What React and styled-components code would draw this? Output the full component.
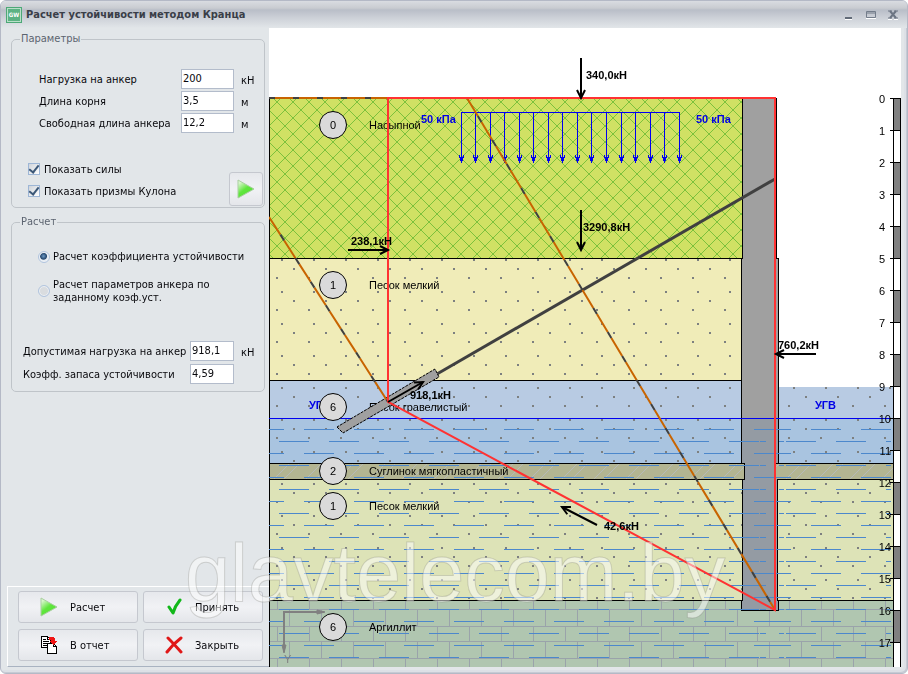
import React, { useState } from "react";
import styled, { createGlobalStyle } from "styled-components";

const GlobalStyle = createGlobalStyle`
  * { box-sizing: border-box; }
  html, body { margin: 0; background: #ffffff; }
  body, button, input {
    font-family: "DejaVu Sans Condensed", "DejaVu Sans", sans-serif;
    font-size: 11px;
    line-height: 13px;
    color: #08080c;
  }
`;

const Window = styled.div`
  position: relative;
  display: flex;
  flex-direction: column;
  min-height: 100vh;
  padding: 0 6px 6px 0;
  overflow: hidden;
  background: #e2e6e9;
  border: 1px solid #b4b9c6;
  border-radius: 6px;
  box-shadow: inset -1px -1px 0 #c6cad4, inset -3px -3px 0 #dde0e6;
`;

const TitleBar = styled.header`
  display: flex;
  align-items: center;
  height: 27px;
  margin-right: -6px;
  padding: 0 7px 0 5px;
  background: linear-gradient(#d9dce1 0, #c9ccd1 7px, #b9bec8 9px, #cdd1d8 17px, #e2e6e9 27px);
`;

const Title = styled.h1`
  flex: 1;
  margin: 0 0 0 4px;
  font-size: 11px;
  line-height: 14px;
  font-weight: bold;
  color: #3a3e48;
`;

const Controls = styled.div`
  display: flex;
  gap: 8px;
`;

const ControlButton = styled.button`
  display: grid;
  place-items: center;
  width: 14px;
  height: 14px;
  padding: 0;
  border: 0;
  background: none;
`;

const Body = styled.div`
  display: flex;
  flex: 1;
`;

const Sidebar = styled.aside`
  display: flex;
  flex-direction: column;
  width: 268px;
  flex: none;
  padding-left: 6px;
`;

const Groups = styled.form`
  display: flex;
  flex-direction: column;
  flex: 1;
  gap: 7px;
  padding: 4px 4px 0;
`;

const Group = styled.fieldset`
  min-width: 0;
  margin: 0;
  padding: ${(p) => p.$padding};
  border: 1px solid #bfc4c9;
  border-radius: 5px;
`;

const Legend = styled.legend`
  margin-left: 8px;
  padding: 0 1px;
  line-height: 14px;
  color: #5c6470;
`;

const FieldList = styled.div`
  display: flex;
  flex-direction: column;
  gap: ${(p) => p.$gap}px;
  padding-left: ${(p) => p.$indent}px;
`;

const FieldRow = styled.div`
  display: flex;
  align-items: center;
  height: 20px;
`;

const FieldLabel = styled.label`
  flex: 1;
  white-space: nowrap;
`;

const NumberBox = styled.input`
  width: ${(p) => p.$width}px;
  height: 20px;
  padding: 0 1px 2px;
  border: 1px solid #b3bccb;
  border-radius: 0;
  background: #ffffff;
  outline: none;
`;

const Unit = styled.span`
  width: 23px;
  margin-left: 7px;
  padding-top: 3px;
`;

const ToggleArea = styled.div`
  display: flex;
  justify-content: space-between;
  height: 48px;
  margin-top: 25px;
  padding: 0 1px 0 16px;
`;

const CheckLabel = styled.label`
  display: flex;
  align-items: center;
  gap: 4px;
  height: 22px;
`;

const CheckBox = styled.input`
  appearance: none;
  display: grid;
  place-items: center;
  width: 12px;
  height: 12px;
  margin: 0;
  border: 1px solid #9db6d6;
  background: linear-gradient(135deg, #cfd4da, #ffffff);
  &:checked::after {
    content: "";
    width: 4px;
    height: 8px;
    margin-top: -2px;
    border: solid #3c5878;
    border-width: 0 2px 2px 0;
    transform: rotate(38deg);
  }
`;

const RadioList = styled.div`
  display: flex;
  flex-direction: column;
  gap: 15px;
  padding: 0 16px 0 26px;
  margin-bottom: 37px;
`;

const RadioLabel = styled.label`
  display: flex;
  align-items: center;
  gap: 4px;
`;

const Radio = styled.input`
  appearance: none;
  flex: none;
  width: 12px;
  height: 12px;
  margin: 0 -1px 0 0;
  border: 1px solid #b0c4de;
  border-radius: 50%;
  background: #d9dcdf;
  box-shadow: inset 0 0 0 1px #eef1f5;
  &:checked {
    background: radial-gradient(circle at 45% 42%, #6f9cc8 0, #24476f 3px, #e6ecf3 4px);
  }
`;

const Button = styled.button`
  display: flex;
  align-items: center;
  gap: 12px;
  height: 32px;
  padding: 0 0 0 21px;
  border: 1px solid #c5c8cf;
  border-radius: 3px;
  background: linear-gradient(#e6e8ec, #f1f2f5 50%, #e4e6ea);
  text-align: left;
`;

const IconButton = styled(Button)`
  align-self: flex-end;
  justify-content: center;
  width: 34px;
  height: 34px;
  padding: 0;
`;

const Actions = styled.div`
  display: grid;
  grid-template-columns: 1fr 1fr;
  gap: 6px 5px;
  padding: 4px 6px 5px 10px;
  border-top: 1px solid #ffffff;
  border-left: 1px solid #ffffff;
  border-bottom: 1px solid #a9b3c1;
`;

const Canvas = styled.main`
  flex: 1;
  min-width: 0;
  background: #ffffff;
`;

const Drawing = styled.svg`
  display: block;
  width: 100%;
  height: auto;
  font-family: "Liberation Sans", Arial, sans-serif;
  font-size: 11px;
`;

const Watermark = styled.div`
  position: absolute;
  left: 184px;
  bottom: 64px;
  font-family: "Liberation Sans", Arial, sans-serif;
  font-size: 81px;
  line-height: 72px;
  color: rgba(255, 255, 255, 0.5);
  -webkit-text-stroke: 1px rgba(110, 112, 105, 0.25);
  pointer-events: none;
`;

function PlayIcon() {
  return (
    <svg width="18" height="20" viewBox="0 0 18 20" aria-hidden="true">
      <defs>
        <linearGradient id="play" x1="0" y1="0" x2="0.7" y2="1">
          <stop offset="0.15" stopColor="#d8f6cc" />
          <stop offset="0.55" stopColor="#5fe63c" />
          <stop offset="1" stopColor="#57df38" />
        </linearGradient>
      </defs>
      <path d="M1 1 17 10 1 19z" fill="url(#play)" stroke="#a9cfa0" strokeWidth="1" />
    </svg>
  );
}

function AcceptIcon() {
  return (
    <svg width="18" height="18" viewBox="0 0 18 18" aria-hidden="true">
      <path d="M4 9 8 15Q10 8 15 2" fill="none" stroke="#12b81a" strokeWidth="3" strokeLinecap="round" strokeLinejoin="round" />
    </svg>
  );
}

function CloseIcon() {
  return (
    <svg width="18" height="18" viewBox="0 0 18 18" aria-hidden="true">
      <path d="M3 2Q8 7 16 16M16 2Q8 8 2 16" fill="none" stroke="#e01818" strokeWidth="3" strokeLinecap="round" />
    </svg>
  );
}

function ReportIcon() {
  return (
    <svg width="18" height="18" viewBox="0 0 18 18" shapeRendering="crispEdges" aria-hidden="true">
      <path d="M1.5 .5h6l3 3v8h-9z" fill="#fff" stroke="#000" />
      <path d="M7.500 .5v3h3M3 3.500h3M3 5.500h6M3 7.500h6M3 9.500h6" fill="none" stroke="#000" />
      <path d="M7.500 7.500h6l3 3v7h-9z" fill="#fff" stroke="#000" />
      <path d="M13.500 7.500v3h3" fill="none" stroke="#000" />
      <path d="M9 1h4l2 2v2h2l-4 4-4-4h2V4H9z" fill="#f01414" />
    </svg>
  );
}

function AppIcon() {
  return (
    <svg width="16" height="16" viewBox="0 0 16 16" aria-hidden="true">
      <rect width="16" height="16" fill="#4da877" />
      <rect x="1.500" y="1.500" width="13" height="13" fill="#5cb283" stroke="#b9dfc9" />
      <text x="8" y="10" textAnchor="middle" fill="#fff" fontSize="6" fontWeight="bold">GW</text>
    </svg>
  );
}

const layers = [
  { n: "0", name: "Насыпной", y: 98, h: 160, fill: "#d0e164", hatch: "cross", mark: 125 },
  { n: "1", name: "Песок мелкий", y: 258, h: 122, fill: "#f0ecb8", hatch: "dots", mark: 285 },
  { n: "6", name: "Песок гравелистый", y: 380, h: 83, fill: "#b8cbe3", hatch: "dots", mark: 407 },
  { n: "2", name: "Суглинок мягкопластичный", y: 463, h: 16, fill: "#b3b592", hatch: "slant", mark: 471 },
  { n: "1", name: "Песок мелкий", y: 479, h: 121, fill: "#dde3b7", hatch: "dots", mark: 506 },
  { n: "6", name: "Аргиллит", y: 600, h: 67, fill: "#b0c6b0", hatch: "brick", mark: 627 },
];

function Patterns() {
  return (
    <defs>
      <pattern id="cross" x="269" y="94" width="16" height="16" patternUnits="userSpaceOnUse">
        <path d="M-1 -1 17 17M17 -1 -1 17" stroke="#7cc13c" fill="none" />
      </pattern>
      <pattern id="dots" width="32" height="32" patternUnits="userSpaceOnUse">
        <path d="M25 3h2v2h-2zM5 12h2v2h-2zM20 21h2v2h-2z" fill="#7d8080" />
      </pattern>
      <pattern id="slant" x="274" y="463" width="32" height="16" patternUnits="userSpaceOnUse">
        <path d="M0 16 16 0M10 16 26 0" stroke="#b6bab8" fill="none" />
      </pattern>
      <pattern id="brick" width="32" height="32" patternUnits="userSpaceOnUse">
        <path d="M0 1.500H32M0 18.500H32M1.500 1V18M21.500 18V32M21.500 0V1" stroke="#9aa3aa" fill="none" />
      </pattern>
      <pattern id="water" width="50" height="24" patternUnits="userSpaceOnUse">
        <path d="M4 21.500H34M29 9.500H50M0 9.500H9" stroke="#4c88cc" fill="none" />
      </pattern>
      <pattern id="waterRight" x="7" width="50" height="24" patternUnits="userSpaceOnUse">
        <path d="M4 21.500H34M29 9.500H50M0 9.500H9" stroke="#4c88cc" fill="none" />
      </pattern>
    </defs>
  );
}

function Arrow({ x1, y1, x2, y2, label, lx, ly }) {
  const angle = (Math.atan2(y2 - y1, x2 - x1) * 180) / Math.PI;
  return (
    <g>
      <path d={`M${x1} ${y1}L${x2} ${y2}`} stroke="#000" strokeWidth="2" />
      <path d="M-8 -4 0 0-8 4" transform={`translate(${x2} ${y2}) rotate(${angle})`} fill="none" stroke="#000" strokeWidth="2" />
      <text x={lx} y={ly} fontWeight="bold">{label}</text>
    </g>
  );
}

function SoilSection() {
  const loads = Array.from({ length: 16 }, (_, i) => Math.floor(461 + i * 14.55) + 0.5);
  const depths = Array.from({ length: 18 }, (_, i) => i);
  return (
    <Drawing viewBox="269 28 632 639" preserveAspectRatio="xMinYMin meet" role="img" aria-label="Схема устойчивости">
      <Patterns />
      <g shapeRendering="crispEdges">
        {layers.map((l) => (
          <g key={l.y}>
            <rect x="269" y={l.y} width="473" height={l.h} fill={l.fill} />
            {l.y >= 463 && <rect x="742" y={l.y} width="151" height={l.h} fill={l.fill} />}
          </g>
        ))}
        <rect x="778" y="387" width="115" height="76" fill="#b8cbe3" />
        <rect x="269" y="418" width="473" height="45" fill="#a9c4e0" />
        <rect x="778" y="418" width="115" height="45" fill="#a9c4e0" />
        {layers.map((l) => (
          <rect key={l.y} x="269" y={l.y} width={l.y >= 463 ? 624 : 473} height={l.h} fill={`url(#${l.hatch})`} />
        ))}
        <rect x="778" y="387" width="115" height="76" fill="url(#dots)" />
        <path d="M269.500 98V667M269 258.500H742M269 380.500H742M269 463.500H893M269 479.500H893M269 600.500H893" stroke="#000" fill="none" />
        <path
          d="M742.500 98V258.500H741.500V463.500H744.500V479.500H742.500V600.500H741.500V610.500H778.500V600.500H777.500V479.500H775.500V463.500H778.500V258.500H776.500V98z"
          fill="#a0a0a0"
          stroke="#000"
        />
        <path d="M742 419H778V463H775V479H777V601H778V610H742V601H743V480H745V463H742z" fill="#949ba3" />
        <rect x="269" y="420" width="515" height="247" fill="url(#water)" />
        <rect x="760" y="420" width="131" height="247" fill="url(#waterRight)" />
        <path d="M269 418.500H893" stroke="#0000f0" />
      </g>

      <g fontWeight="bold" fill="#0000e6">
        <text x="309" y="409">УГВ</text>
        <text x="815" y="409">УГВ</text>
      </g>
      {layers.map((l) => (
        <g key={l.mark}>
          <circle cx="333" cy={l.mark} r="13.500" fill="#dadada" stroke="#000" />
          <text x="333" y={l.mark + 4} textAnchor="middle">{l.n}</text>
          <text x="369" y={l.mark + 4}>{l.name}</text>
        </g>
      ))}

      <g fill="none" stroke="#0000f0" shapeRendering="crispEdges">
        <path d="M461 112.500H680" />
        {loads.map((x) => (
          <path key={x} d={`M${x} 112V163M${x - 2} 155V158M${x + 2} 155V158M${x - 1} 157V161M${x + 1} 157V161`} />
        ))}
      </g>
      <g fontWeight="bold" fill="#0000e6">
        <text x="421" y="123">50 кПа</text>
        <text x="696" y="123">50 кПа</text>
      </g>

      <path d="M437 374 775 179" stroke="#404040" strokeWidth="3" />
      <path d="M337 427 343 433 439 377 435 369z" fill="#a0a0a0" stroke="#000" strokeDasharray="3 1" />
      <g fill="none" strokeWidth="2">
        <path d="M269 98H275" stroke="#404040" />
        <path d="M275 98H388" stroke="#c86400" strokeDasharray="18 6" />
        <path d="M275 98H388" stroke="#404040" strokeDasharray="6 18" strokeDashoffset="-18" />
        <path d="M467 98 775 610M269 217 388 402" stroke="#c86400" strokeDasharray="21 7" />
        <path d="M467 98 775 610M269 217 388 402" stroke="#404040" strokeDasharray="7 21" strokeDashoffset="-21" />
        <path d="M388 98H775V610L388 402z" stroke="#ff3232" />
      </g>

      <Arrow x1={581} y1={58} x2={581} y2={98} label="340,0кН" lx={586} ly={79} />
      <Arrow x1={581} y1={210} x2={581} y2={250} label="3290,8кН" lx={583} ly={231} />
      <Arrow x1={348} y1={250} x2={388} y2={250} label="238,1кН" lx={351} ly={245} />
      <Arrow x1={816} y1={354} x2={776} y2={354} label="760,2кН" lx={778} ly={349} />
      <Arrow x1={388} y1={402} x2={423} y2={382} label="918,1кН" lx={410} ly={399} />
      <Arrow x1={597} y1={525} x2={562} y2={507} label="42,6кН" lx={604} ly={530} />

      <g stroke="#808080" strokeWidth="2" fill="#808080">
        <path d="M324 612H284V652" fill="none" />
        <path d="M317 610 325 612 317 614zM282 645 284 653 286 645z" strokeWidth="1" />
        <text x="284" y="663" stroke="none">Y</text>
      </g>

      <g shapeRendering="crispEdges">
        <rect x="893" y="98" width="8" height="569" fill="#fff" />
        {depths.map((d) => (
          <g key={d}>
            {d % 2 === 0 && <rect x="894" y={98 + d * 32} width="6" height="32" fill="#808080" />}
            <path d={`M890 ${98.5 + d * 32}H901`} stroke="#000" />
            <text x={d > 9 ? 891 : 885} y={103 + d * 32} textAnchor="end">{d}</text>
          </g>
        ))}
        <path d="M893.500 98V667M900.500 98V667" stroke="#000" />
      </g>
    </Drawing>
  );
}

function Field({ id, label, unit, width, value, focus }) {
  const [text, setText] = useState(value);
  return (
    <FieldRow>
      <FieldLabel htmlFor={id}>{label}</FieldLabel>
      <NumberBox id={id} $width={width} value={text} autoFocus={focus} onChange={(e) => setText(e.target.value)} />
      <Unit>{unit}</Unit>
    </FieldRow>
  );
}

export default function App() {
  const [mode, setMode] = useState("factor");
  return (
    <>
      <GlobalStyle />
      <Window>
        <TitleBar>
          <AppIcon />
          <Title>Расчет устойчивости методом Кранца</Title>
          <Controls>
            <ControlButton aria-label="Свернуть">
              <svg width="12" height="12" viewBox="0 0 12 12"><path d="M2 8h7v2H2z" fill="#626b78" /><path d="M2 10h7v1H2z" fill="#fff" /></svg>
            </ControlButton>
            <ControlButton aria-label="Развернуть">
              <svg width="12" height="12" viewBox="0 0 12 12"><path d="M1.500 2.500h9v6h-9zM1.500 4h9" fill="none" stroke="#737c8a" /><path d="M1 9.500h10" stroke="#fff" /></svg>
            </ControlButton>
            <ControlButton aria-label="Закрыть окно">
              <svg width="12" height="12" viewBox="0 0 12 12"><path d="M1 10.500h4M7 10.500h4" stroke="#fff" /><path d="M3 2 9 9M9 2 3 9" stroke="#6c7583" strokeWidth="2" /><path d="M1 2h4M7 2h4M1 9h4M7 9h4" stroke="#6c7583" /></svg>
            </ControlButton>
          </Controls>
        </TitleBar>
        <Body>
          <Sidebar>
            <Groups>
              <Group $padding="23px 0 1px">
                <Legend>Параметры</Legend>
                <FieldList $gap={2} $indent={27}>
                  <Field id="load" label="Нагрузка на анкер" unit="кН" width={53} value="200" focus />
                  <Field id="root-length" label="Длина корня" unit="м" width={53} value="3,5" />
                  <Field id="free-length" label="Свободная длина анкера" unit="м" width={53} value="12,2" />
                </FieldList>
                <ToggleArea>
                  <div>
                    <CheckLabel><CheckBox type="checkbox" defaultChecked />Показать силы</CheckLabel>
                    <CheckLabel><CheckBox type="checkbox" defaultChecked />Показать призмы Кулона</CheckLabel>
                  </div>
                  <IconButton type="button" aria-label="Обновить схему"><PlayIcon /></IconButton>
                </ToggleArea>
              </Group>
              <Group $padding="21px 0 7px">
                <Legend>Расчет</Legend>
                <RadioList>
                  <RadioLabel>
                    <Radio type="radio" name="mode" checked={mode === "factor"} onChange={() => setMode("factor")} />
                    Расчет коэффициента устойчивости
                  </RadioLabel>
                  <RadioLabel>
                    <Radio type="radio" name="mode" checked={mode === "anchor"} onChange={() => setMode("anchor")} />
                    <span>Расчет параметров анкера по<br />заданному коэф.уст.</span>
                  </RadioLabel>
                </RadioList>
                <FieldList $gap={3} $indent={11}>
                  <Field id="allowed" label="Допустимая нагрузка на анкер" unit="кН" width={44} value="918,1" />
                  <Field id="safety" label="Коэфф. запаса устойчивости" unit="" width={44} value="4,59" />
                </FieldList>
              </Group>
            </Groups>
            <Actions>
              <Button type="button"><PlayIcon />Расчет</Button>
              <Button type="button"><AcceptIcon />Принять</Button>
              <Button type="button"><ReportIcon />В отчет</Button>
              <Button type="button"><CloseIcon />Закрыть</Button>
            </Actions>
          </Sidebar>
          <Canvas>
            <SoilSection />
          </Canvas>
        </Body>
        <Watermark>glavtelecom.by</Watermark>
      </Window>
    </>
  );
}
